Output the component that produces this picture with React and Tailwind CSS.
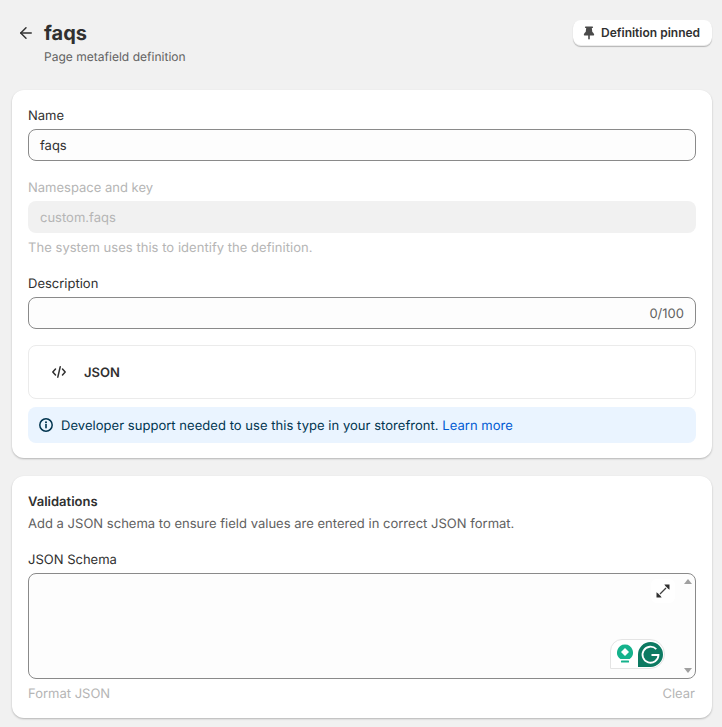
import { ArrowLeft } from 'lucide-react'

function Field({ label, children, disabled }) {
  return (
    <div className="flex flex-col gap-[4px]">
      <div className={`h-[20px] text-[13px] leading-[22px] ${disabled ? 'text-[#b5b5b5]' : 'text-[#303030]'}`}>{label}</div>
      {children}
    </div>
  )
}

function PinIcon() {
  return (
    <svg width="16" height="16" viewBox="0 0 16 16" fill="#4a4a4a" aria-hidden="true">
      <path d="M4.600 1.500h6.800c.4 0 .7.3.7.7s-.3.8-.7.8h-.6l.5 3.900c1 .6 1.700 1.500 1.900 2.800 0 .4-.3.8-.7.8H8.800v3.200c0 .4-.3.8-.8.8s-.8-.4-.8-.8v-3.200H3.500c-.4 0-.7-.4-.7-.8.2-1.300.9-2.200 1.900-2.800L5.200 3h-.6c-.4 0-.7-.4-.7-.8s.3-.7.7-.7Z" />
    </svg>
  )
}

function CodeIcon() {
  return (
    <svg width="16" height="16" viewBox="0 0 16 16" fill="none" stroke="#303030" strokeWidth="1.500" strokeLinecap="round" strokeLinejoin="round" aria-hidden="true">
      <path d="M4.500 5 1.800 8l2.700 3M11.500 5l2.700 3-2.700 3M9.200 2.800 6.800 13.200" />
    </svg>
  )
}

function InfoIcon() {
  return (
    <svg width="16" height="16" viewBox="0 0 16 16" fill="none" aria-hidden="true">
      <circle cx="8" cy="8" r="6.200" stroke="#00344f" strokeWidth="1.500" />
      <path d="M8 7.500v3.200" stroke="#00344f" strokeWidth="1.600" strokeLinecap="round" />
      <circle cx="8" cy="5.200" r="1" fill="#00344f" />
    </svg>
  )
}

function ExpandIcon() {
  return (
    <svg width="16" height="16" viewBox="0 0 16 16" fill="none" aria-hidden="true">
      <path d="M5 11 11 5" stroke="#404040" strokeWidth="1.300" />
      <path d="M9.300 1.500h5.200v5.200L12.900 5.600 10.400 3.100Z" fill="#303030" />
      <path d="M6.700 14.500H1.500V9.300L3.100 10.400 5.600 12.900Z" fill="#303030" />
    </svg>
  )
}

function GrammarlyBadge() {
  return (
    <div className="absolute right-[30px] bottom-[9px] flex h-[30px] w-[55px] items-center gap-[4px] rounded-tl-[12px] rounded-tr-[15px] rounded-br-[15px] border border-[#e4e4e4] bg-white pl-[5px]">
      <svg width="18" height="20" viewBox="0 0 18 20" aria-hidden="true">
        <path d="M9 .5a8 8 0 0 1 4.600 14.500H4.400A8 8 0 0 1 9 .5Z" fill="#15b28c" />
        <path d="M9 4 13 8 9 12 5 8Z" fill="#fff" />
        <rect x="5" y="16.500" width="8" height="2" rx=".5" fill="#15b28c" />
      </svg>
      <svg width="25" height="25" viewBox="0 0 25 25" aria-hidden="true">
        <path d="M12.500 0a12.500 12.500 0 1 1 0 25H0V12.500A12.500 12.500 0 0 1 12.500 0Z" fill="#0d7a62" />
        <path d="M18.300 7.200a8 8 0 1 0 2.200 5.800h-7" fill="none" stroke="#fff" strokeWidth="1.800" />
      </svg>
    </div>
  )
}

export default function App() {
  return (
    <div className="h-[727px] w-[722px] overflow-hidden bg-[#f1f1f1] font-['Inter',sans-serif] text-[#303030] [text-rendering:geometricPrecision]">
      <div className="flex items-start justify-between pt-[20px] pr-[10px] pl-[17px]">
        <div className="flex items-start">
          <ArrowLeft className="mt-[4px] mr-[9px] h-[18px] w-[18px] text-[#303030]" strokeWidth={1.900} />
          <div>
            <h1 className="h-[26px] text-[20px] leading-[26px] font-[650] text-[#303030]">faqs</h1>
            <p className="mt-[1px] text-[12px] leading-[20px] tracking-[0.02px] text-[#616161]">Page metafield definition</p>
          </div>
        </div>
        <button type="button" className="flex h-[26px] w-[139px] items-center gap-[4px] rounded-[8px] bg-white pl-[8px] text-[12px] font-semibold text-[#303030] shadow-[0_1px_1px_rgba(0,0,0,0.25),inset_0_-1px_0_rgba(0,0,0,0.08)]">
          <PinIcon />
          Definition pinned
        </button>
      </div>

      <section className="mt-[23px] mr-[10px] ml-[12px] flex h-[368px] flex-col rounded-[12px] bg-white px-[16px] pt-[15px] shadow-[0_1px_2px_rgba(0,0,0,0.25)]">
        <Field label="Name">
          <div className="flex h-[32px] items-center rounded-[8px] border border-[#8a8a8a] bg-[#fdfdfd] px-[11px] pt-[4px] text-[13px]">faqs</div>
        </Field>
        <div className="mt-[16px]">
          <Field label="Namespace and key" disabled>
            <div className="flex h-[32px] items-center rounded-[8px] bg-[#f1f1f1] px-[12px] pt-[4px] text-[13px] text-[#b5b5b5]">custom.faqs</div>
          </Field>
          <p className="mt-[5px] text-[13px] leading-[20px] tracking-[0.04px] text-[#b5b5b5]">The system uses this to identify the definition.</p>
        </div>
        <div className="mt-[15px]">
          <Field label="Description">
            <div className="flex h-[32px] items-center justify-end rounded-[8px] border border-[#8a8a8a] bg-[#fdfdfd] px-[11px] pt-[4px] text-[13px] text-[#616161]">0/100</div>
          </Field>
        </div>
        <div className="mt-[16px] flex h-[54px] items-center rounded-[8px] border border-[#ebebeb] pl-[22px] text-[13px] font-semibold">
          <CodeIcon />
          <span className="ml-[17px] pt-[4px]">JSON</span>
        </div>
        <div className="mt-[8px] flex h-[36px] items-center gap-[7px] rounded-[8px] bg-[#eaf4ff] pl-[10px] text-[13px] text-[#00344f]">
          <InfoIcon />
          <span className="pt-[4px] tracking-[0.04px]">
            Developer support needed to use this type in your storefront. <a href="#" className="text-[#005bd3]">Learn more</a>
          </span>
        </div>
      </section>

      <section className="mt-[18px] mr-[10px] ml-[12px] flex h-[242px] flex-col rounded-[12px] bg-white px-[16px] pt-[16px] shadow-[0_1px_2px_rgba(0,0,0,0.25)]">
        <h2 className="text-[13px] leading-[20px] font-semibold">Validations</h2>
        <p className="mt-[2px] text-[13px] leading-[20px] tracking-[0.015px] text-[#616161]">Add a JSON schema to ensure field values are entered in correct JSON format.</p>
        <div className="mt-[15px]">
          <Field label="JSON Schema">
            <div className="relative h-[106px] rounded-[8px] border border-[#8a8a8a] bg-[#fdfdfd]">
              <div className="absolute top-[5px] right-[3px] h-0 w-0 border-x-[4px] border-b-[5px] border-x-transparent border-b-[#a0a0a0]" />
              <div className="absolute right-[3px] bottom-[5px] h-0 w-0 border-x-[4px] border-t-[5px] border-x-transparent border-t-[#a0a0a0]" />
              <div className="absolute top-[5px] right-[20px] flex h-[24px] w-[24px] items-center justify-center rounded-[6px] bg-white">
                <ExpandIcon />
              </div>
              <GrammarlyBadge />
            </div>
          </Field>
        </div>
        <div className="mt-[5px] flex justify-between pr-[1px] text-[13px] leading-[20px] text-[#b5b5b5]">
          <span>Format JSON</span>
          <span>Clear</span>
        </div>
      </section>
    </div>
  )
}
